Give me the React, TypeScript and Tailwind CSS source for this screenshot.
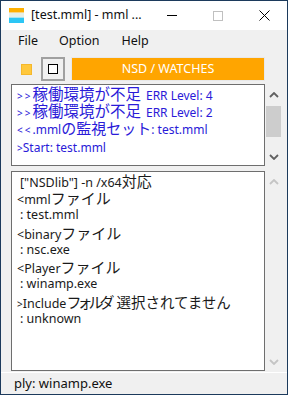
import React from "react";

const latin = "font-['Noto_Sans','Open_Sans','Noto_Sans_CJK_JP',sans-serif]";
const jp = "font-['Noto_Sans_CJK_JP',sans-serif]";

function J({ children, cls = "text-[15px]" }: { children: React.ReactNode; cls?: string }) {
  return <span className={`${jp} ${cls}`}>{children}</span>;
}

function ScrollArrow({ up, color }: { up: boolean; color: string }) {
  return (
    <svg width="10" height="6" viewBox="0 0 10 6">
      <path
        d={up ? "M1 5 L5 1 L9 5" : "M1 1 L5 5 L9 1"}
        fill="none"
        stroke={color}
        strokeWidth="1.8"
      />
    </svg>
  );
}

export default function App() {
  const upper = [
    { a: ">>", j: "稼働環境が不足", b: "ERR Level: 4" },
    { a: ">>", j: "稼働環境が不足", b: "ERR Level: 2" },
  ];
  return (
    <div className={`w-[288px] h-[395px] border border-[#1c3a5c] bg-[#f0f0f0] flex flex-col overflow-hidden ${latin}`}>
      {/* Title bar */}
      <div className="h-[29px] bg-white flex items-center shrink-0">
        <div className="ml-[8px] w-[15px] h-[15px] flex flex-col">
          <div className="h-[4px] bg-[#ffb000]" />
          <div className="h-[1px] bg-[#f6d58a]" />
          <div className="h-[4px] bg-[#e6efe8]" />
          <div className="h-[1px] bg-[#a6e4f4]" />
          <div className="h-[5px] bg-[#2cc6f5]" />
        </div>
        <span className="ml-[7px] text-[12.5px] text-[#111]">[test.mml] - mml ...</span>
        <div className="ml-auto flex items-center h-full">
          <div className="w-[46px] h-full flex items-center justify-center">
            <div className="w-[10px] h-[1px] bg-black" />
          </div>
          <div className="w-[46px] h-full flex items-center justify-center">
            <div className="w-[10px] h-[10px] border border-[#c0c0c0]" />
          </div>
          <div className="w-[46px] h-full flex items-center justify-center">
            <svg width="11" height="11" viewBox="0 0 11 11">
              <path d="M0.5 0.5 L10.5 10.5 M10.5 0.5 L0.5 10.5" stroke="#000" strokeWidth="1" />
            </svg>
          </div>
        </div>
      </div>
      {/* Menu bar */}
      <div className="h-[22px] flex items-center text-[12.5px] text-[#111] shrink-0">
        <span className="ml-[17px]">File</span>
        <span className="ml-[21px]">Option</span>
        <span className="ml-[22px]">Help</span>
      </div>
      {/* Toolbar */}
      <div className="mt-[5px] h-[24px] flex items-center shrink-0">
        <div className="ml-[20px] w-[11px] h-[11px] bg-[#ffc83d] border border-[#f5b82c]" />
        <div className="ml-[9px] w-[24px] h-[24px] border-2 border-[#a0a0a0] bg-[#f0f0f0] flex items-center justify-center">
          <div className="w-[10px] h-[10px] border border-black bg-white" />
        </div>
        <div className="ml-[6px] w-[194px] h-[24px] bg-[#ffa500] border border-[#e8e8e8] flex items-center justify-center text-white text-[12.5px]">
          NSD / WATCHES
        </div>
      </div>
      {/* Upper box */}
      <div className="mt-[3px] ml-[10px] flex h-[82px] shrink-0">
        <div className="w-[254px] h-full border border-[#6e6e6e] bg-white pl-[5px] text-[#2a1ad8] overflow-hidden">
          {upper.map((l, i) => (
            <div key={i} className="h-[17px] leading-[17px] whitespace-nowrap">
              <span className="text-[10px] tracking-[2px]">{l.a}</span>
              <J cls="text-[15.5px]">{l.j}</J>
              <span className="text-[12px] ml-[5px]">{l.b}</span>
            </div>
          ))}
          <div className="h-[18px] leading-[18px] whitespace-nowrap">
            <span className="text-[10px] tracking-[2px]">&lt;&lt;</span>
            <span className="text-[12px]">.mml</span>
            <J>の監視セット</J>
            <span className="text-[12px]">: test.mml</span>
          </div>
          <div className="h-[18px] leading-[18px] whitespace-nowrap">
            <span className="text-[10px]">&gt;</span>
            <span className="text-[12px]">Start: test.mml</span>
          </div>
        </div>
        <div className="w-[17px] h-full flex flex-col items-center">
          <div className="h-[18px] flex items-center justify-center pt-[4px]">
            <ScrollArrow up color="#606060" />
          </div>
          <div className="mt-[4px] w-[15px] h-[31px] bg-[#cdcdcd]" />
          <div className="mt-auto h-[16px] flex items-center justify-center pb-[3px]">
            <ScrollArrow up={false} color="#606060" />
          </div>
        </div>
      </div>
      {/* Lower box */}
      <div className="mt-[5px] ml-[10px] flex h-[200px] shrink-0">
        <div className="w-[254px] h-full border border-[#6e6e6e] bg-white pl-[5px] text-[#1a1a1a] text-[12.5px] overflow-hidden">
          <div className="h-[17px] leading-[17px] whitespace-nowrap pl-[3px]">["NSDlib"] -n /x64<J>対応</J></div>
          <div className="h-[17.3px] leading-[17px] whitespace-nowrap">&lt;mml<J>ファイル</J></div>
          <div className="h-[17.3px] leading-[17px] whitespace-nowrap pl-[3px]">: test.mml</div>
          <div className="h-[17.3px] leading-[17px] whitespace-nowrap">&lt;binary<J>ファイル</J></div>
          <div className="h-[17.3px] leading-[17px] whitespace-nowrap pl-[3px]">: nsc.exe</div>
          <div className="h-[17.3px] leading-[17px] whitespace-nowrap">&lt;Player<J>ファイル</J></div>
          <div className="h-[17.3px] leading-[17px] whitespace-nowrap pl-[3px]">: winamp.exe</div>
          <div className="h-[17.3px] leading-[17px] whitespace-nowrap">
            <span className="text-[10px]">&gt;</span>Include<J cls="text-[15px] tracking-[-4px]">フォルダ</J>
            <J cls="text-[14.5px] ml-[6px]">選択されてません</J>
          </div>
          <div className="h-[17px] leading-[17px] whitespace-nowrap pl-[3px]">: unknown</div>
        </div>
        <div className="w-[17px] h-full flex flex-col items-center">
          <div className="h-[18px] flex items-center justify-center pt-[4px]">
            <ScrollArrow up color="#c4c4c4" />
          </div>
          <div className="mt-auto h-[16px] flex items-center justify-center pb-[3px]">
            <ScrollArrow up={false} color="#c4c4c4" />
          </div>
        </div>
      </div>
      {/* Status bar */}
      <div className="mt-[1px] h-[1px] bg-white shrink-0" />
      <div className="flex-1 flex items-center pl-[13px] text-[13px] text-[#111]">ply: winamp.exe</div>
    </div>
  );
}
